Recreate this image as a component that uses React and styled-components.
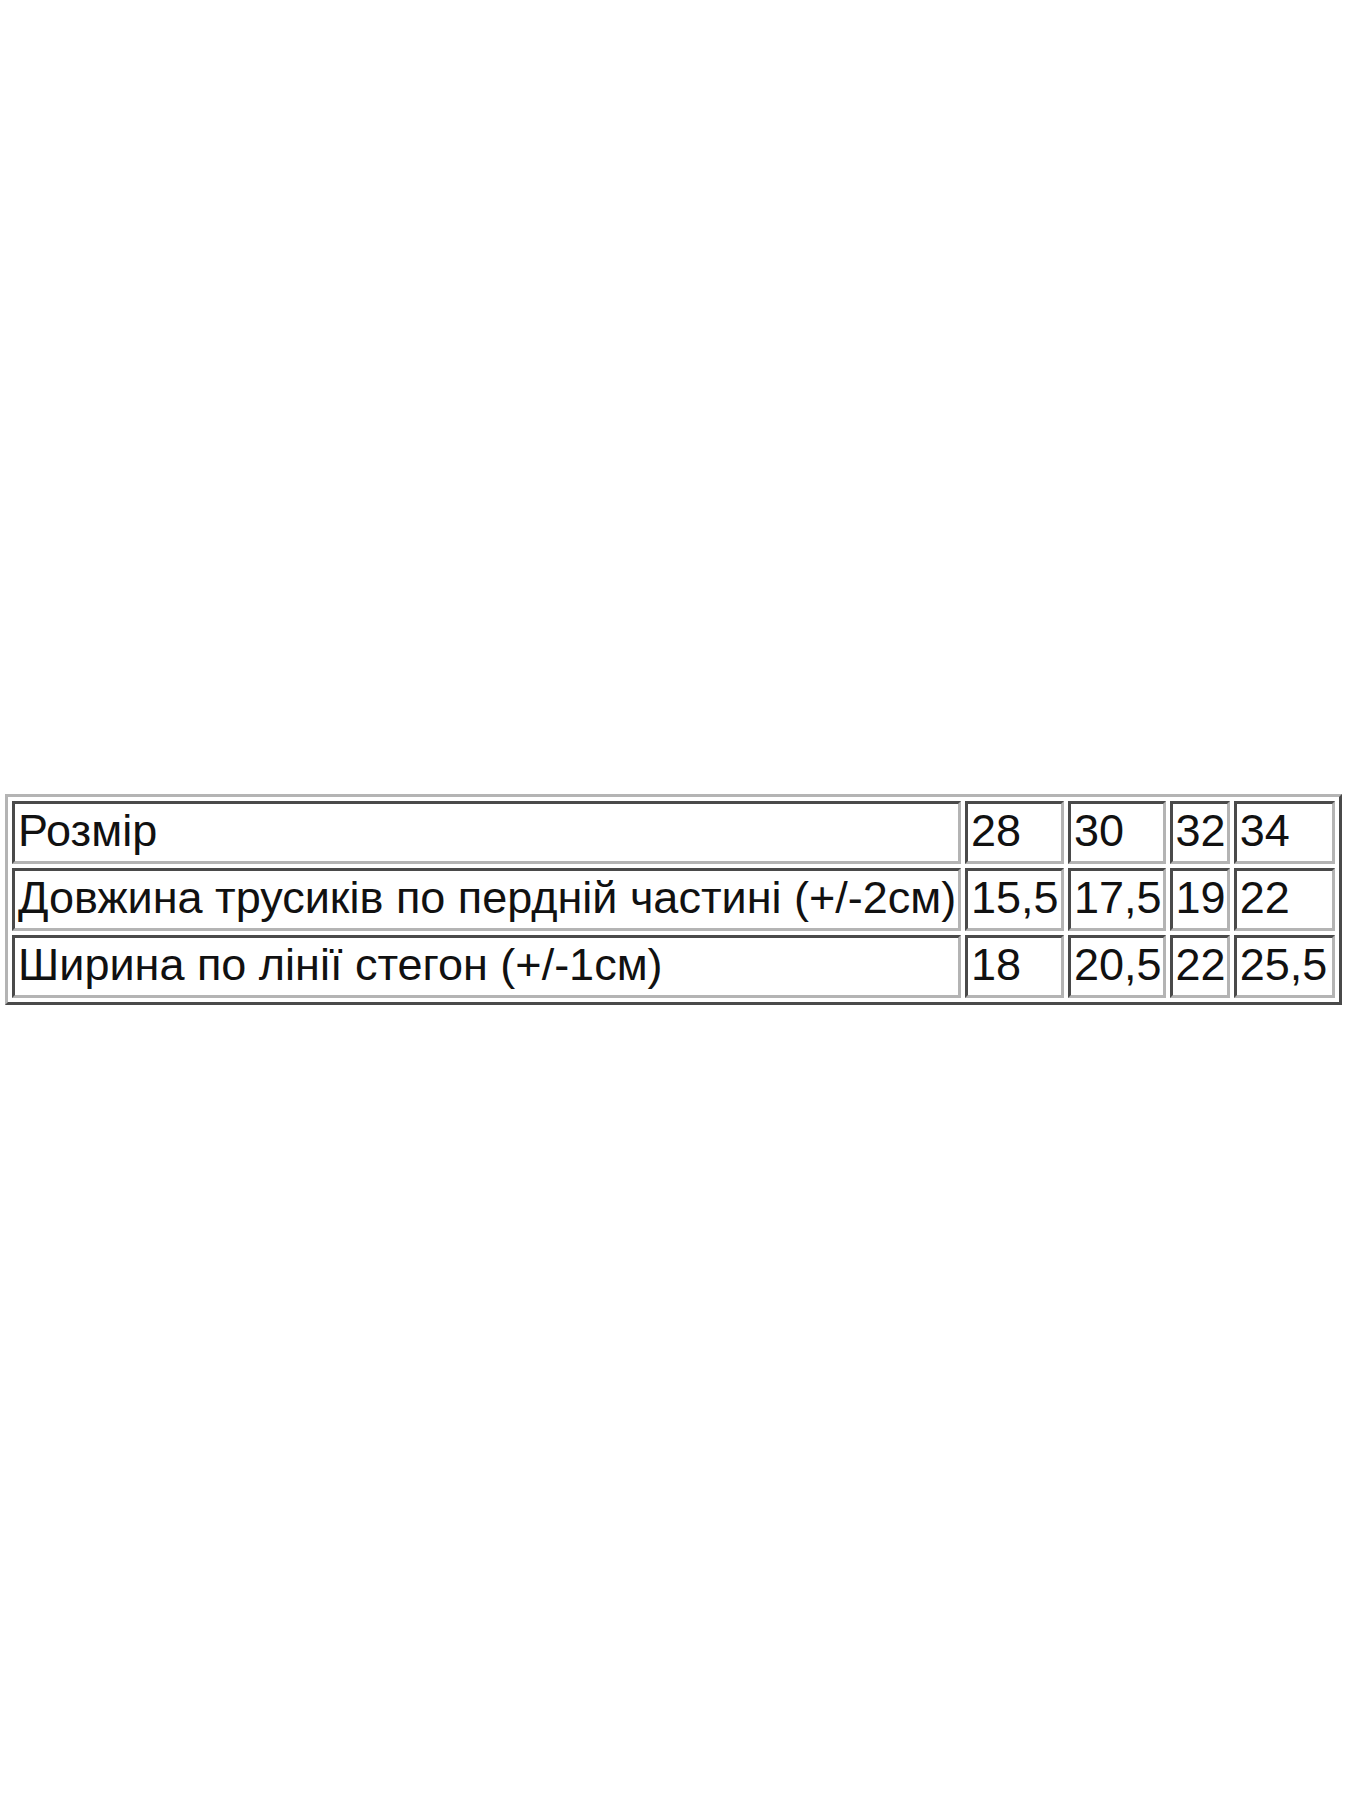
import React from 'react';
import styled, { createGlobalStyle } from 'styled-components';

const GlobalStyle = createGlobalStyle`
  html, body {
    margin: 0;
    padding: 0;
    background: #ffffff;
  }
`;

const Page = styled.div`
  width: 1350px;
  min-height: 1800px;
  box-sizing: border-box;
  padding: 794px 0 0 5px;
  background: #ffffff;
`;

const SizeTable = styled.table`
  border-collapse: separate;
  border-spacing: 4px;
  border-style: solid;
  border-width: 3px;
  border-color: #b4b4b4 #4a4a4a #4a4a4a #b4b4b4;
  font-family: 'Liberation Sans', Arial, sans-serif;
  font-size: 45px;
  color: #111;
`;

const Cell = styled.td`
  box-sizing: border-box;
  width: ${(p) => p.$w}px;
  height: 63px;
  padding: 0 1px 4px 3px;
  border-style: solid;
  border-width: 3px;
  border-color: #4a4a4a #b4b4b4 #b4b4b4 #4a4a4a;
  text-align: left;
  vertical-align: middle;
  white-space: nowrap;
  line-height: 52px;
`;

const widths = [949, 99, 97, 60, 101];

const rows = [
  ['Розмір', '28', '30', '32', '34'],
  ['Довжина трусиків по пердній частині (+/-2см)', '15,5', '17,5', '19', '22'],
  ['Ширина по лінії стегон (+/-1см)', '18', '20,5', '22', '25,5'],
];

export default function App() {
  return (
    <>
      <GlobalStyle />
      <Page>
        <SizeTable>
          <tbody>
            {rows.map((row, i) => (
              <tr key={i}>
                {row.map((text, j) => (
                  <Cell key={j} $w={widths[j]}>
                    {text}
                  </Cell>
                ))}
              </tr>
            ))}
          </tbody>
        </SizeTable>
      </Page>
    </>
  );
}
